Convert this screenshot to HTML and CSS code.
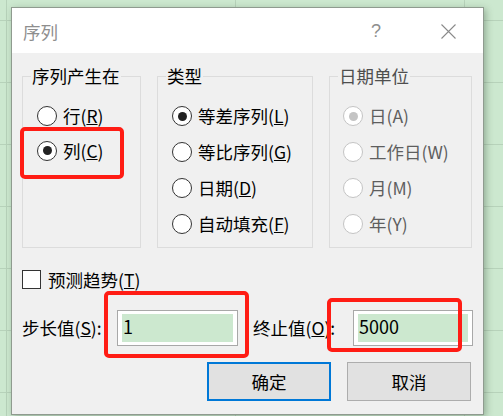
FILE: index.html
```html
<!DOCTYPE html>
<html lang="zh-CN">
<head>
<meta charset="utf-8">
<title>序列</title>
<link rel="stylesheet" href="styles.css">
</head>
<body>
<div class="dialog">
  <div class="titlebar">
    <span class="title">序列</span>
    <span class="help">?</span>
    <span class="close">
      <svg width="15" height="15" viewBox="0 0 15 15"><path d="M0.5 0.5 L14.5 14.5 M14.5 0.5 L0.5 14.5" stroke="#8a8a8a" stroke-width="1.1" fill="none"/></svg>
    </span>
  </div>
  <div class="content">
    <div class="groups">
      <fieldset class="group g1">
        <legend>序列产生在</legend>
        <div class="opt"><span class="radio"></span>行(<u>R</u>)</div>
        <div class="opt"><span class="radio on"></span>列(<u>C</u>)</div>
      </fieldset>
      <fieldset class="group g2">
        <legend>类型</legend>
        <div class="opt"><span class="radio on"></span>等差序列(<u>L</u>)</div>
        <div class="opt"><span class="radio"></span>等比序列(<u>G</u>)</div>
        <div class="opt"><span class="radio"></span>日期(<u>D</u>)</div>
        <div class="opt"><span class="radio"></span>自动填充(<u>F</u>)</div>
      </fieldset>
      <fieldset class="group g3 disabled">
        <legend>日期单位</legend>
        <div class="opt"><span class="radio on"></span>日(A)</div>
        <div class="opt"><span class="radio"></span>工作日(W)</div>
        <div class="opt"><span class="radio"></span>月(M)</div>
        <div class="opt"><span class="radio"></span>年(Y)</div>
      </fieldset>
    </div>
    <div class="check-row"><span class="checkbox"></span>预测趋势(<u>T</u>)</div>
    <div class="input-row">
      <span class="lbl l1">步长值(<u>S</u>):</span>
      <span class="field f1"><span class="fill">1</span></span>
      <span class="lbl l2">终止值(<u>O</u>):</span>
      <span class="field f2"><span class="fill">5000</span></span>
    </div>
    <div class="btn-row">
      <span class="btn default">确定</span>
      <span class="btn">取消</span>
    </div>
  </div>
</div>
<div class="mark m1"></div>
<div class="mark m2"></div>
<div class="mark m3"></div>
</body>
</html>
```
FILE: styles.css
```css
html, body {
  margin: 0;
  padding: 0;
}
body {
  width: 503px;
  height: 416px;
  overflow: hidden;
  font-family: "Noto Sans CJK SC", "Noto Sans", sans-serif;
  font-size: 17.5px;
  color: #000;
  background:
    linear-gradient(to right, #b7d2ba 1px, transparent 1px) 6px 0 / 229px 100%,
    linear-gradient(to bottom, #b7d2ba 1px, transparent 1px) 0 20px / 100% 62px,
    #cce8cf;
  padding-top: 7px;
  box-sizing: border-box;
}
.dialog {
  margin-left: 11px;
  width: 473px;
  height: 408px;
  box-sizing: border-box;
  border: 1px solid #8f9b8f;
  box-shadow: 2px 2px 7px rgba(40, 60, 40, 0.35);
  background: #f0f0f0;
  display: flex;
  flex-direction: column;
}
.titlebar {
  height: 45px;
  background: #fff;
  display: flex;
  align-items: center;
  flex: none;
}
.title {
  margin-left: 11px;
  color: #8e8e8e;
  font-size: 17.5px;
  line-height: 20px;
  margin-top: 2px;
}
.help {
  margin-left: auto;
  color: #8e8e8e;
  font-family: "Liberation Sans", sans-serif;
  font-size: 18px;
  line-height: 20px;
  margin-top: 1px;
}
.close {
  margin-left: 60px;
  margin-right: 27px;
  display: flex;
  margin-top: 1px;
}
.content {
  flex: 1;
  padding: 11px 10px 0 10px;
  display: flex;
  flex-direction: column;
}
.groups {
  display: flex;
  gap: 16px;
  height: 184px;
}
.group {
  margin: 0;
  padding: 10px 0 0 0;
  border: 1px solid #dcdcdc;
  box-sizing: border-box;
  height: 184px;
  min-width: 0;
}
.g1 { width: 119px; }
.g2 { width: 156px; }
.g3 { width: 143px; }
.group legend {
  margin-left: 8px;
  padding: 0 1px;
  line-height: 24px;
}
.opt {
  height: 36px;
  display: flex;
  align-items: center;
  line-height: 20px;
  white-space: nowrap;
  padding-left: 14px;
}
.g3 .opt { padding-left: 13px; }
.g1 .opt { height: 35px; }
.radio {
  width: 20px;
  height: 20px;
  box-sizing: border-box;
  border: 1.5px solid #333;
  border-radius: 50%;
  background: #fff;
  margin-right: 6px;
  flex: none;
  display: flex;
  align-items: center;
  justify-content: center;
}
.radio.on::after {
  content: "";
  width: 9px;
  height: 9px;
  border-radius: 50%;
  background: #222;
}
.disabled { color: #5e5e5e; }
.disabled legend { color: #4e4e4e; }
.disabled .radio { border-color: #c4c4c4; }
.disabled .radio.on::after { background: #c4c4c4; }
.check-row {
  margin-top: 22px;
  display: flex;
  align-items: center;
  height: 19px;
  line-height: 20px;
}
.checkbox {
  width: 19px;
  height: 19px;
  box-sizing: border-box;
  border: 1.5px solid #333;
  background: #fff;
  margin-right: 7px;
}
.input-row {
  margin-top: 21px;
  display: flex;
  align-items: center;
  height: 36px;
}
.lbl {
  line-height: 20px;
  white-space: nowrap;
}
.l1 { width: 95px; }
.l2 { width: 100px; margin-left: 15px; }
.field {
  height: 36px;
  box-sizing: border-box;
  border: 1px solid #a8a8a8;
  background: #fff;
  padding: 3px 4px 3px 4px;
  display: flex;
}
.f1 { width: 121px; }
.f2 { width: 120px; }
.fill {
  flex: 1;
  background: #cce8cf;
  font-size: 18px;
  line-height: 24px;
  padding-left: 1px;
}
.btn-row {
  margin-top: 16px;
  display: flex;
  gap: 16px;
  padding-left: 185px;
}
.btn {
  width: 124px;
  height: 39px;
  box-sizing: border-box;
  border: 1px solid #adadad;
  background: #e1e1e1;
  display: flex;
  align-items: center;
  justify-content: center;
  line-height: 20px;
}
.btn.default {
  border: 2px solid #0078d7;
}
.mark {
  position: absolute;
  box-sizing: border-box;
  border: 4px solid #ff1c14;
  border-radius: 5px;
}
.m1 { left: 20px; top: 127px; width: 104px; height: 52px; }
.m2 { left: 104px; top: 291px; width: 145px; height: 67px; }
.m3 { left: 327px; top: 298px; width: 135px; height: 54px; }
```
